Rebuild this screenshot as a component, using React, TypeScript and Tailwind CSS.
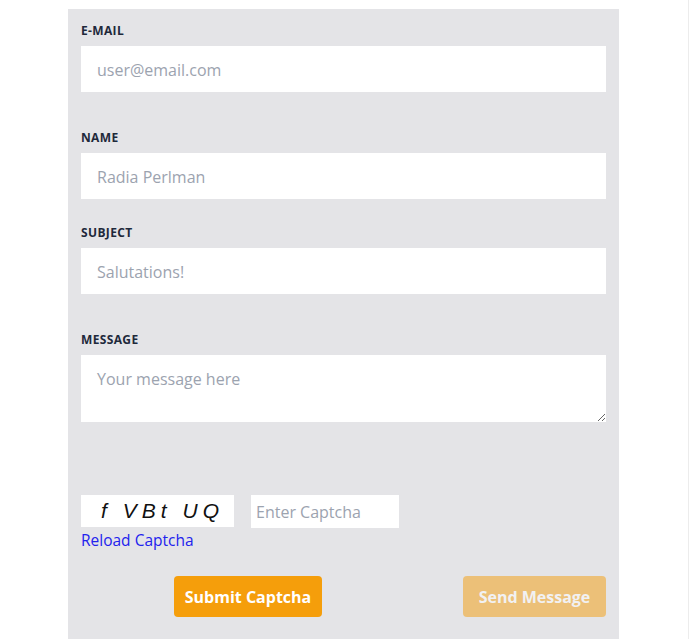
import React from "react";

export default function App() {
  const inputCls =
    "block w-full h-[46px] bg-white px-4 pt-[1px] text-[16px] text-gray-700 placeholder:text-[#9ca3af] outline-none";
  const labelCls =
    "block text-[12px] leading-4 pt-[1px] mb-[7px] font-bold uppercase tracking-[0.03em] text-[#1e293b]";
  return (
    <div
      className="w-[689px] h-[639px] bg-white border-r border-[#ececec] overflow-hidden"
      style={{ fontFamily: '"Open Sans", "Noto Sans", sans-serif' }}
    >
      <div className="ml-[68px] mt-[9px] w-[551px] h-[640px] bg-[#e4e4e7] px-[13px] pt-[13px]">
        <label className={labelCls}>E-mail</label>
        <input className={inputCls} placeholder="user@email.com" />

        <label className={labelCls + " mt-[37px]"}>Name</label>
        <input className={inputCls} placeholder="Radia Perlman" />

        <label className={labelCls + " mt-[25px]"}>Subject</label>
        <input className={inputCls} placeholder="Salutations!" />

        <label className={labelCls + " mt-[37px]"}>Message</label>
        <textarea
          className="block w-full h-[67px] bg-white px-4 py-[12px] text-[16px] leading-6 text-gray-700 placeholder:text-[#9ca3af] outline-none"
          placeholder="Your message here"
        />

        <div className="mt-[73px] flex items-start gap-[17px]">
          <div
            className="w-[153px] h-[32px] bg-white flex items-center pl-[20px] text-[21px] italic text-[#111] tracking-[0.24em] whitespace-pre"
            style={{ fontFamily: '"Liberation Sans", Arial, sans-serif' }}
          >
            {"f VBt UQ"}
          </div>
          <input
            className="w-[148px] h-[33px] bg-white px-[5px] pt-[1px] text-[16px] text-gray-700 placeholder:text-[#9ca3af] outline-none"
            placeholder="Enter Captcha"
          />
        </div>
        <a href="#" className="block text-[15.5px] leading-6 text-[#2222ee] w-fit">
          Reload Captcha
        </a>

        <div className="mt-[24px] flex items-center justify-between">
          <button className="ml-[93px] w-[148px] h-[41px] rounded bg-[#f59e0b] text-white font-bold text-[16px]">
            Submit Captcha
          </button>
          <button className="w-[143px] h-[41px] rounded bg-[#f59e0b] text-white font-bold text-[16px] opacity-50">
            Send Message
          </button>
        </div>
      </div>
    </div>
  );
}
